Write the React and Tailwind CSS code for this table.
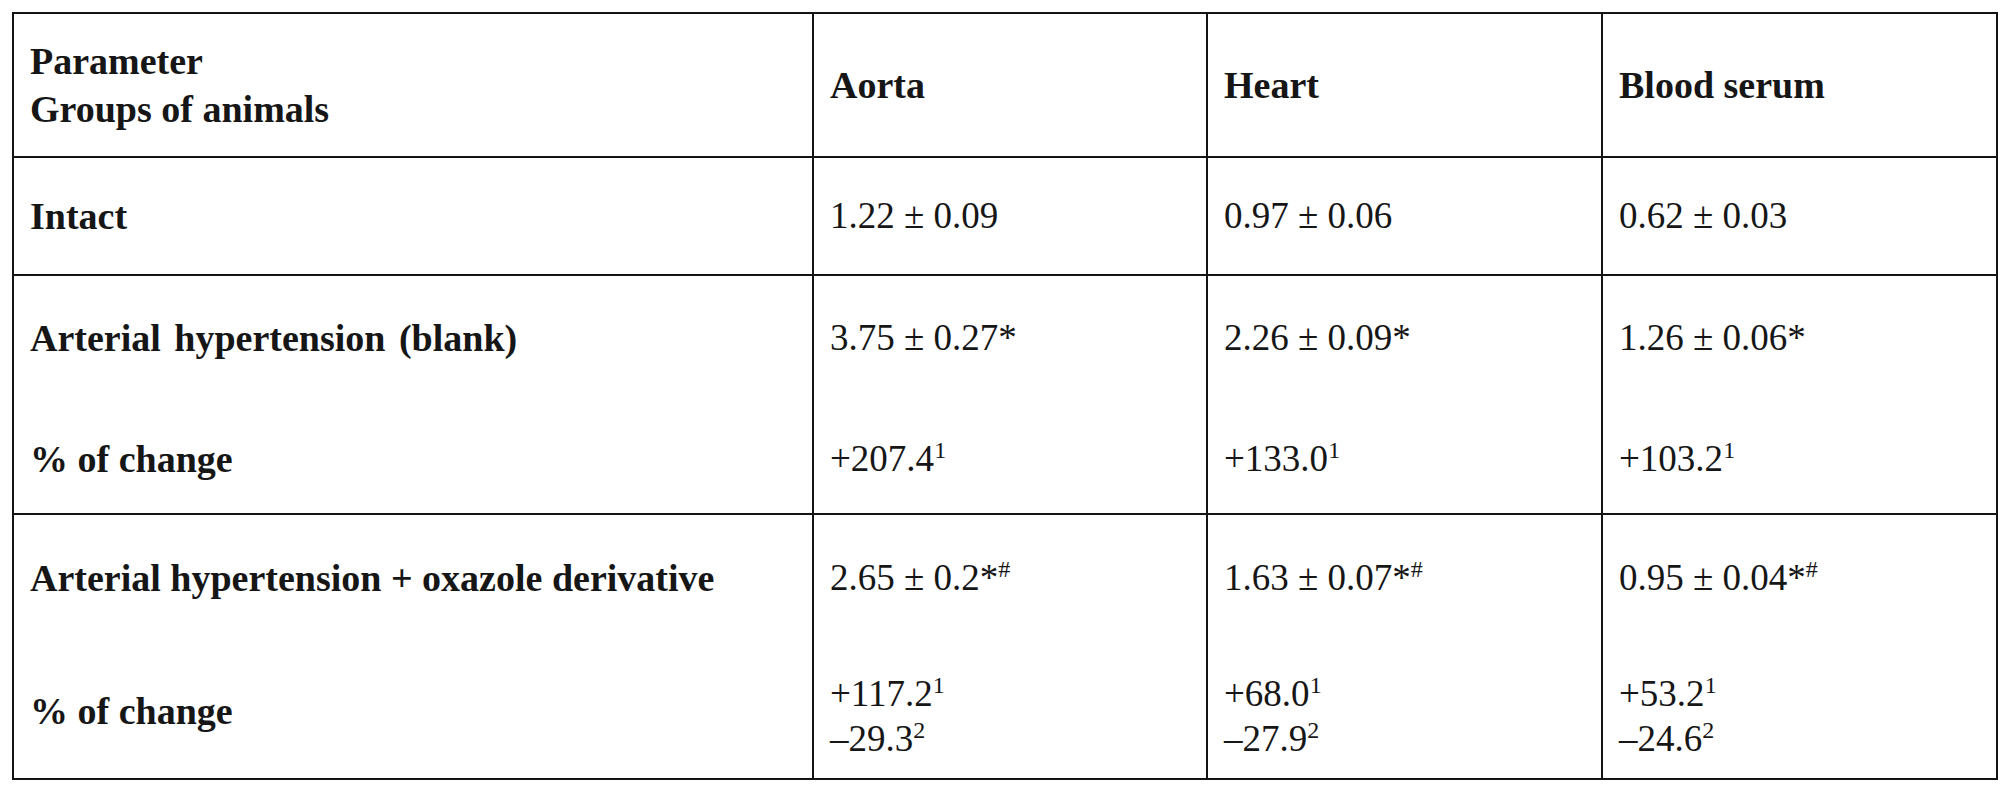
import React from "react";

function Sup({ children }) {
  return <sup className="text-[24px] top-[-0.55em]">{children}</sup>;
}

export default function App() {
  const cell = "bg-white pl-[16px]";
  const bold = "font-bold text-[38px]";
  return (
    <div className="w-[2015px] h-[800px] bg-white pt-[12px] pl-[12px] font-['Liberation_Serif','Times_New_Roman',serif] text-[37px] text-[#161616]">
      <div className="grid w-fit grid-cols-[798px_392px_393px_393px] grid-rows-[142px_116px_237px_263px] gap-[2px] bg-[#141414] p-[2px]">
        {/* Header row */}
        <div className={`${cell} ${bold} flex flex-col justify-center leading-[48px]`}>
          <div>Parameter</div>
          <div>Groups of animals</div>
        </div>
        <div className={`${cell} ${bold} flex items-center`}>Aorta</div>
        <div className={`${cell} ${bold} flex items-center`}>Heart</div>
        <div className={`${cell} ${bold} flex items-center`}>Blood serum</div>

        {/* Intact */}
        <div className={`${cell} ${bold} flex items-center`}>Intact</div>
        <div className={`${cell} flex items-center`}>1.22 ± 0.09</div>
        <div className={`${cell} flex items-center`}>0.97 ± 0.06</div>
        <div className={`${cell} flex items-center`}>0.62 ± 0.03</div>

        {/* Arterial hypertension (blank) */}
        <div className={`${cell} ${bold} pt-[38px] leading-[48px]`}>
          <div className="[word-spacing:4px]">Arterial hypertension (blank)</div>
          <div className="mt-[73px]">% of change</div>
        </div>
        <div className={`${cell} pt-[38px] leading-[48px]`}>
          <div>3.75 ± 0.27*</div>
          <div className="mt-[73px]">
            +207.4<Sup>1</Sup>
          </div>
        </div>
        <div className={`${cell} pt-[38px] leading-[48px]`}>
          <div>2.26 ± 0.09*</div>
          <div className="mt-[73px]">
            +133.0<Sup>1</Sup>
          </div>
        </div>
        <div className={`${cell} pt-[38px] leading-[48px]`}>
          <div>1.26 ± 0.06*</div>
          <div className="mt-[73px]">
            +103.2<Sup>1</Sup>
          </div>
        </div>

        {/* Arterial hypertension + oxazole derivative */}
        <div className={`${cell} ${bold} pt-[39px] leading-[48px]`}>
          <div>Arterial hypertension + oxazole derivative</div>
          <div className="mt-[85px]">% of change</div>
        </div>
        <div className={`${cell} pt-[39px] leading-[48px]`}>
          <div>
            2.65 ± 0.2*<Sup>#</Sup>
          </div>
          <div className="mt-[69px] leading-[45px]">
            <div>
              +117.2<Sup>1</Sup>
            </div>
            <div>
              –29.3<Sup>2</Sup>
            </div>
          </div>
        </div>
        <div className={`${cell} pt-[39px] leading-[48px]`}>
          <div>
            1.63 ± 0.07*<Sup>#</Sup>
          </div>
          <div className="mt-[69px] leading-[45px]">
            <div>
              +68.0<Sup>1</Sup>
            </div>
            <div>
              –27.9<Sup>2</Sup>
            </div>
          </div>
        </div>
        <div className={`${cell} pt-[39px] leading-[48px]`}>
          <div>
            0.95 ± 0.04*<Sup>#</Sup>
          </div>
          <div className="mt-[69px] leading-[45px]">
            <div>
              +53.2<Sup>1</Sup>
            </div>
            <div>
              –24.6<Sup>2</Sup>
            </div>
          </div>
        </div>
      </div>
    </div>
  );
}
